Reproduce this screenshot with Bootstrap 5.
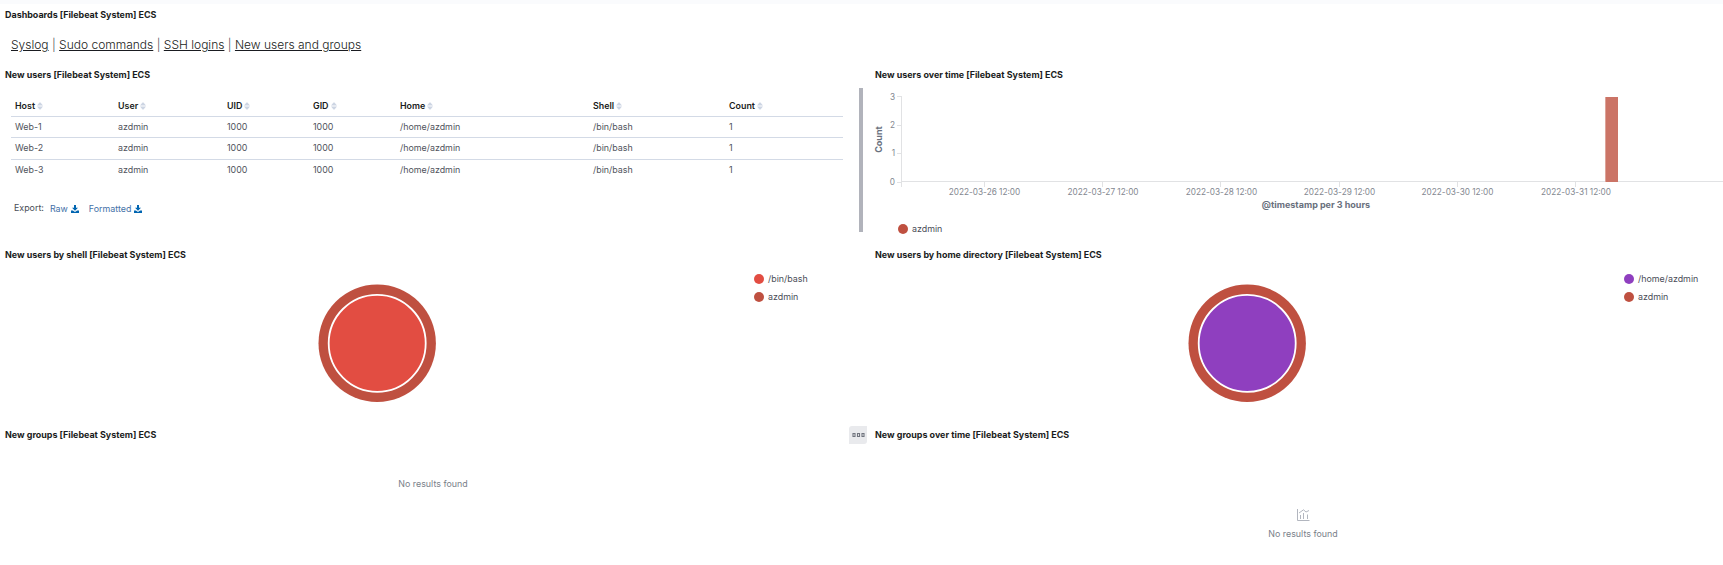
<!DOCTYPE html>
<html lang="en">
<head>
<meta charset="utf-8">
<title>Dashboards [Filebeat System] ECS</title>
<link href="https://cdn.jsdelivr.net/npm/bootstrap@5.3.0/dist/css/bootstrap.min.css" rel="stylesheet">
<style>
  body { font-family: Inter, "Liberation Sans", sans-serif; font-size: 8.9px; line-height: 14px; color: #4a4d57; background: #fff; overflow: hidden; }
  .topline { height: 4px; background: #fafbfd; }
  .dash { display: grid; grid-template-columns: 870px 1fr; grid-template-rows: 60px 180px 180px 141px; }
  .panel { overflow: hidden; min-width: 0; }
  .panel-title { height: 22px; line-height: 22px; padding-left: 5px; font-size: 8.95px; font-weight: 700; color: #1a1c21; margin: 0; white-space: nowrap; }
  .dash-links { font-size: 12px; font-weight: 300; line-height: 20px; padding: 9px 0 0 11px; white-space: pre; }
  .dash-links a { color: #1a1c21; text-decoration: underline; }
  .data { width: 832px; table-layout: fixed; margin: 11px 0 0 11px; border-collapse: separate; border-spacing: 0; }
  .data th, .data td { padding: 0 0 0 4px; height: 21px; font-weight: 400; line-height: 20px; vertical-align: top; color: #50535c; }
  .data th { height: 20px; line-height: 18px; font-weight: 600; color: #1a1c21; }
  .data th, .data tr:not(:last-child) td { border-bottom: 1px solid #d3dae6; }
  .data tbody tr:nth-child(2) td { height: 22px; }
  .data svg { margin-left: 2px; vertical-align: -1px; }
  .export { margin: 20px 0 0 14px; gap: 6px; }
  .export a { color: #4471a8; text-decoration: none; padding-top: 1px; }
  .export svg { margin-left: 3px; vertical-align: -1px; }
  .scroll { width: 4px; height: 144px; margin: 2px 7px 0 0; background: #b1b3bb; }
  .pie-box { padding: 16px 0 0 313px; }
  .legend { width: 112px; padding-top: 4px; }
  .legend div { height: 18px; line-height: 18px; }
  .dot { width: 10px; height: 10px; border-radius: 50%; margin-right: 4px; flex: none; }
  .c-shell { background: #e24d42; } .c-user { background: #bf5040; } .c-home { background: #8f3fbf; }
  .menu { width: 18px; height: 18px; background: #e9eaed; border-radius: 3px 0 3px 0; margin: 2px 3px 0 0; }
  .none { color: #7a7f8a; }
  .bins text { font-size: 8.25px; fill: #838790; }
  .bins .axis-name { font-size: 9px; font-weight: 700; fill: #69707d; }
</style>
</head>
<body>
<svg width="0" height="0" class="d-none">
  <symbol id="sort" viewBox="0 0 6 8"><path d="M0 3.500 2.500.500h1L6 3.500zM0 4.500h6L3.500 7.500h-1z" fill="#cdd5e3"/></symbol>
  <symbol id="dl" viewBox="0 0 8 8"><path d="M3 0h2v2.700h2L4 5.700 1 2.700h2zM0 5.500h1.900L4 7l2.100-1.500H8V8H0z" fill="#0065b1"/></symbol>
</svg>
<div class="topline"></div>
<main class="dash">
  <section class="panel" style="grid-column: span 2">
    <h2 class="panel-title">Dashboards [Filebeat System] ECS</h2>
    <nav class="dash-links"><a href="#">Syslog</a> | <a href="#">Sudo commands</a> | <a href="#">SSH logins</a> | <a href="#">New users and groups</a></nav>
  </section>

  <section class="panel">
    <h2 class="panel-title">New users [Filebeat System] ECS</h2>
    <div class="d-flex justify-content-between">
      <div>
        <table class="data">
          <colgroup><col width="103"><col width="109"><col width="86"><col width="87"><col width="193"><col width="136"><col width="118"></colgroup>
          <thead><tr>
            <th>Host<svg width="6" height="8"><use href="#sort"/></svg></th><th>User<svg width="6" height="8"><use href="#sort"/></svg></th><th>UID<svg width="6" height="8"><use href="#sort"/></svg></th><th>GID<svg width="6" height="8"><use href="#sort"/></svg></th><th>Home<svg width="6" height="8"><use href="#sort"/></svg></th><th>Shell<svg width="6" height="8"><use href="#sort"/></svg></th><th>Count<svg width="6" height="8"><use href="#sort"/></svg></th>
          </tr></thead>
          <tbody>
            <tr><td>Web-1</td><td>azdmin</td><td>1000</td><td>1000</td><td>/home/azdmin</td><td>/bin/bash</td><td>1</td></tr>
            <tr><td>Web-2</td><td>azdmin</td><td>1000</td><td>1000</td><td>/home/azdmin</td><td>/bin/bash</td><td>1</td></tr>
            <tr><td>Web-3</td><td>azdmin</td><td>1000</td><td>1000</td><td>/home/azdmin</td><td>/bin/bash</td><td>1</td></tr>
          </tbody>
        </table>
        <div class="export d-flex"><span>Export:</span><a href="#">Raw<svg width="8" height="8"><use href="#dl"/></svg></a><a href="#" class="ms-1">Formatted<svg width="8" height="8"><use href="#dl"/></svg></a></div>
      </div>
      <div class="scroll"></div>
    </div>
  </section>

  <section class="panel">
    <h2 class="panel-title">New users over time [Filebeat System] ECS</h2>
    <svg class="bins d-block" width="853" height="132" viewBox="870 86 853 132">
      <path d="M901.5 96v91M897 96.500h4M897 125.500h4M897 153.500h4M897 182.500h4M901 181.500h822M984.500 182v5M1102.500 182v5M1220.500 182v5M1339.500 182v5M1457.500 182v5M1575.500 182v5" stroke="#e1e2e4" fill="none"/>
      <path d="M1605 97h13v85h-13z" fill="#cb7466"/><path d="M1605 97h1v85h-1z" fill="#dda399"/>
      <g text-anchor="end"><text x="895" y="100">3</text><text x="895" y="128">2</text><text x="895" y="156">1</text><text x="895" y="185">0</text></g>
      <g text-anchor="middle"><text x="984.500" y="195">2022-03-26 12:00</text><text x="1103" y="195">2022-03-27 12:00</text><text x="1221.500" y="195">2022-03-28 12:00</text><text x="1339.500" y="195">2022-03-29 12:00</text><text x="1457.500" y="195">2022-03-30 12:00</text><text x="1576" y="195">2022-03-31 12:00</text>
      <text class="axis-name" x="1316" y="208">@timestamp per 3 hours</text>
      <text class="axis-name" transform="translate(882 139.500) rotate(-90)">Count</text></g>
    </svg>
    <div class="d-flex align-items-center" style="padding-left: 28px; height: 22px"><span class="dot c-user"></span>azdmin</div>
  </section>

  <section class="panel">
    <h2 class="panel-title">New users by shell [Filebeat System] ECS</h2>
    <div class="d-flex justify-content-between">
      <div class="pie-box"><svg width="128" height="128" viewBox="0 0 128 128"><circle cx="64.200" cy="61.300" r="58.700" fill="#bf5040"/><circle cx="64.200" cy="61.300" r="48.500" fill="#e24d42" stroke="#fff" stroke-width="1.800"/></svg></div>
      <div class="legend me-1"><div class="d-flex align-items-center"><span class="dot c-shell"></span>/bin/bash</div><div class="d-flex align-items-center"><span class="dot c-user"></span>azdmin</div></div>
    </div>
  </section>

  <section class="panel">
    <h2 class="panel-title">New users by home directory [Filebeat System] ECS</h2>
    <div class="d-flex justify-content-between">
      <div class="pie-box"><svg width="128" height="128" viewBox="0 0 128 128"><circle cx="64.200" cy="61.300" r="58.700" fill="#bf5040"/><circle cx="64.200" cy="61.300" r="48.500" fill="#8f3fbf" stroke="#fff" stroke-width="1.800"/></svg></div>
      <div class="legend" style="width: 99px"><div class="d-flex align-items-center"><span class="dot c-home"></span>/home/azdmin</div><div class="d-flex align-items-center"><span class="dot c-user"></span>azdmin</div></div>
    </div>
  </section>

  <section class="panel">
    <div class="d-flex justify-content-between">
      <h2 class="panel-title">New groups [Filebeat System] ECS</h2>
      <div class="menu d-flex align-items-center justify-content-center"><svg width="13" height="4" viewBox="0 0 13 4"><path d="M1 .5h2v3h-2zM5.500.5h2v3h-2zM10 .5h2v3h-2z" fill="none" stroke="#70747e" stroke-width="1.100"/></svg></div>
    </div>
    <div class="none text-center" style="padding: 31px 4px 0 0">No results found</div>
  </section>

  <section class="panel">
    <h2 class="panel-title">New groups over time [Filebeat System] ECS</h2>
    <div class="none d-flex flex-column align-items-center" style="width: 866px; padding-top: 63px">
      <svg width="13" height="12" viewBox="0 0 13 12" fill="none" stroke="#a9aeb8" stroke-width=".9"><path d="M.5 0v11.500h12M2 4 6.500.800 9 3l3-1.500M3.500 6v4M6.500 4v6M10.500 5.500v4.500"/></svg>
      <div style="margin-top: 6px">No results found</div>
    </div>
  </section>
</main>
<script src="https://cdn.jsdelivr.net/npm/bootstrap@5.3.0/dist/js/bootstrap.bundle.min.js"></script>
</body>
</html>
